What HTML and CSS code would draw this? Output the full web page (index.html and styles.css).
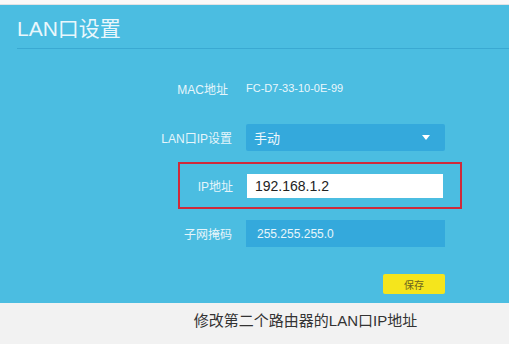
FILE: index.html
```html
<!DOCTYPE html>
<html lang="zh-CN">
<head>
  <meta charset="UTF-8">
  <title>LAN口设置</title>
  <link rel="stylesheet" href="styles.css">
</head>
<body>
  <div class="top-strip"></div>
  <div class="panel">
    <div class="panel-header">
      <h1>LAN口设置</h1>
    </div>
    <div class="form">
      <div class="row row-mac">
        <span class="label">MAC地址</span>
        <span class="plain">FC-D7-33-10-0E-99</span>
      </div>
      <div class="row row-mode">
        <span class="label">LAN口IP设置</span>
        <div class="select">
          <span>手动</span>
          <span class="caret"></span>
        </div>
      </div>
      <div class="row row-ip highlight">
        <span class="label">IP地址</span>
        <div class="input">192.168.1.2</div>
      </div>
      <div class="row row-mask">
        <span class="label">子网掩码</span>
        <div class="field">255.255.255.0</div>
      </div>
      <div class="actions">
        <button class="save-btn">保存</button>
      </div>
    </div>
  </div>
  <div class="caption">修改第二个路由器的LAN口IP地址</div>
</body>
</html>
```

FILE: styles.css
```css
body {
  margin: 0;
  width: 509px;
  height: 344px;
  overflow: hidden;
  font-family: "Liberation Sans", "Noto Sans CJK SC", sans-serif;
  background: #f2f2f2;
}
.top-strip {
  height: 4px;
  background: #fbf8f8;
  border-bottom: 1px solid #e2e2e4;
}
.panel {
  height: 298px;
  background: #4bbde1;
  padding-left: 17px;
}
.panel-header {
  height: 43px;
  border-bottom: 1px solid #3aa9d2;
  display: flex;
  align-items: center;
}
.panel-header h1 {
  margin: 0;
  font-size: 21px;
  font-weight: normal;
  color: #eaf7fc;
}
.form {
  padding-top: 27px;
}
.row {
  display: flex;
  align-items: center;
  color: #e6f5fb;
  font-size: 12px;
}
.label {
  width: 229px;
  text-align: right;
  padding-right: 14px;
  box-sizing: border-box;
}
.row-mac {
  height: 24px;
}
.row-mac .label {
  padding-right: 18px;
}
.plain {
  font-size: 11px;
  color: #eaf7fc;
}
.row-mode {
  margin-top: 24px;
}
.select {
  width: 199px;
  height: 27px;
  background: #34a9dc;
  border-radius: 2px;
  display: flex;
  align-items: center;
  justify-content: space-between;
  padding: 0 15px 0 8px;
  box-sizing: border-box;
  color: #eef8fc;
  font-size: 13px;
}
.caret {
  width: 0;
  height: 0;
  border-left: 4px solid transparent;
  border-right: 4px solid transparent;
  border-top: 5px solid #ffffff;
}
.highlight {
  margin-top: 11px;
  margin-left: 161px;
  width: 284px;
  height: 47px;
  border: 2px solid #cf2a3b;
  box-sizing: border-box;
}
.highlight .label {
  width: 67px;
}
.input {
  width: 196px;
  height: 24px;
  background: #ffffff;
  display: flex;
  align-items: center;
  padding-left: 8px;
  box-sizing: border-box;
  font-size: 14px;
  color: #222222;
}
.row-mask {
  margin-top: 11px;
}
.field {
  width: 199px;
  height: 27px;
  background: #34a9dc;
  display: flex;
  align-items: center;
  padding-left: 11px;
  box-sizing: border-box;
  font-size: 12px;
  color: #e8f6fb;
}
.actions {
  display: flex;
  padding-left: 366px;
  margin-top: 27px;
}
.save-btn {
  width: 62px;
  height: 20px;
  border: none;
  border-radius: 2px;
  background: #f5e51c;
  color: #6b6420;
  font-family: inherit;
  font-size: 10px;
  padding: 0;
}
.caption {
  text-align: center;
  padding: 6px 0 0 102px;
  font-size: 15px;
  color: #333333;
}
```
